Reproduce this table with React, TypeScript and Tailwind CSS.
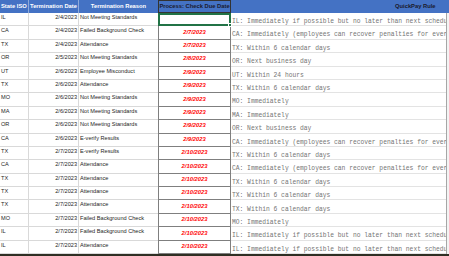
type Row = {
  state: string;
  date: string;
  reason: string;
  due: string;
  rule: string;
};

const rows: Row[] = [
  { state: "IL", date: "2/4/2023", reason: "Not Meeting Standards", due: "", rule: "IL: Immediately if possible but no later than next scheduled payday" },
  { state: "CA", date: "2/4/2023", reason: "Failed Background Check", due: "2/7/2023", rule: "CA: Immediately (employees can recover penalties for every day late)" },
  { state: "TX", date: "2/4/2023", reason: "Attendance", due: "2/7/2023", rule: "TX: Within 6 calendar days" },
  { state: "OR", date: "2/5/2023", reason: "Not Meeting Standards", due: "2/8/2023", rule: "OR: Next business day" },
  { state: "UT", date: "2/6/2023", reason: "Employee Misconduct", due: "2/9/2023", rule: "UT: Within 24 hours" },
  { state: "TX", date: "2/6/2023", reason: "Attendance", due: "2/9/2023", rule: "TX: Within 6 calendar days" },
  { state: "MO", date: "2/6/2023", reason: "Not Meeting Standards", due: "2/9/2023", rule: "MO: Immediately" },
  { state: "MA", date: "2/6/2023", reason: "Not Meeting Standards", due: "2/9/2023", rule: "MA: Immediately" },
  { state: "OR", date: "2/6/2023", reason: "Not Meeting Standards", due: "2/9/2023", rule: "OR: Next business day" },
  { state: "CA", date: "2/6/2023", reason: "E-verify Results", due: "2/9/2023", rule: "CA: Immediately (employees can recover penalties for every day late)" },
  { state: "TX", date: "2/7/2023", reason: "E-verify Results", due: "2/10/2023", rule: "TX: Within 6 calendar days" },
  { state: "CA", date: "2/7/2023", reason: "Attendance", due: "2/10/2023", rule: "CA: Immediately (employees can recover penalties for every day late)" },
  { state: "TX", date: "2/7/2023", reason: "Attendance", due: "2/10/2023", rule: "TX: Within 6 calendar days" },
  { state: "TX", date: "2/7/2023", reason: "Attendance", due: "2/10/2023", rule: "TX: Within 6 calendar days" },
  { state: "TX", date: "2/7/2023", reason: "Attendance", due: "2/10/2023", rule: "TX: Within 6 calendar days" },
  { state: "MO", date: "2/7/2023", reason: "Failed Background Check", due: "2/10/2023", rule: "MO: Immediately" },
  { state: "IL", date: "2/7/2023", reason: "Failed Background Check", due: "2/10/2023", rule: "IL: Immediately if possible but no later than next scheduled payday" },
  { state: "IL", date: "2/7/2023", reason: "Attendance", due: "2/10/2023", rule: "IL: Immediately if possible but no later than next scheduled payday" },
];

const cols = "grid grid-cols-[29px_50px_79px_73px_215px_3px]";

export default function App() {
  return (
    <div className="w-[449px] h-[256px] overflow-hidden bg-white flex flex-col font-['Liberation_Sans',Arial,sans-serif]">
      {/* header */}
      <div className={`${cols} h-[13px] shrink-0 bg-[#4472c4] text-[5.8px] font-bold leading-none`}>
        <div className="flex items-center pl-[1px] text-white border-r border-[#8eaadb]">State ISO</div>
        <div className="flex items-center justify-center text-white border-r border-[#8eaadb]">Termination Date</div>
        <div className="flex items-center justify-center text-white">Termination Reason</div>
        <div className="flex items-center justify-center text-[#1a1a2e] border border-[#333]">Process: Check Due Date</div>
        <div className="flex items-center pl-[164px] text-[#1a1a2e]">QuickPay Rule</div>
        <div className="bg-[#4472c4]" />
      </div>

      {rows.map((r, i) => (
        <div key={i} className={`${cols} h-[13.4px] shrink-0 text-[5.6px] leading-none text-[#262626]`}>
          <div className="flex items-start pt-[2px] pl-[1px] border-b border-r border-[#d9d9d9]">{r.state}</div>
          <div className="flex items-start justify-end pt-[2px] pr-[1px] border-b border-r border-[#d9d9d9]">{r.date}</div>
          <div className="flex items-start pt-[2px] pl-[1px] whitespace-nowrap border-b border-[#d9d9d9]">{r.reason}</div>
          {i === 0 ? (
            <div className="relative border-2 border-[#217346]">
              <div className="absolute -right-[3px] -bottom-[3px] w-[4px] h-[4px] bg-[#217346] border border-white" />
            </div>
          ) : (
            <div className="flex items-center justify-center border-x border-b border-[#7f7f7f] text-[#ff0000] font-bold italic text-[5.8px]">
              {r.due}
            </div>
          )}
          <div className="flex items-end pl-[1px] overflow-hidden whitespace-nowrap border-b border-[#e3e3e3] font-['Liberation_Mono','Courier_New',monospace] text-[6.3px] text-[#757575]">
            {r.rule}
          </div>
          <div className="border-l border-[#a6a6a6] bg-[#f3f3f3]" />
        </div>
      ))}

      <div className="flex-1 bg-[#2f2f24]" />
    </div>
  );
}
